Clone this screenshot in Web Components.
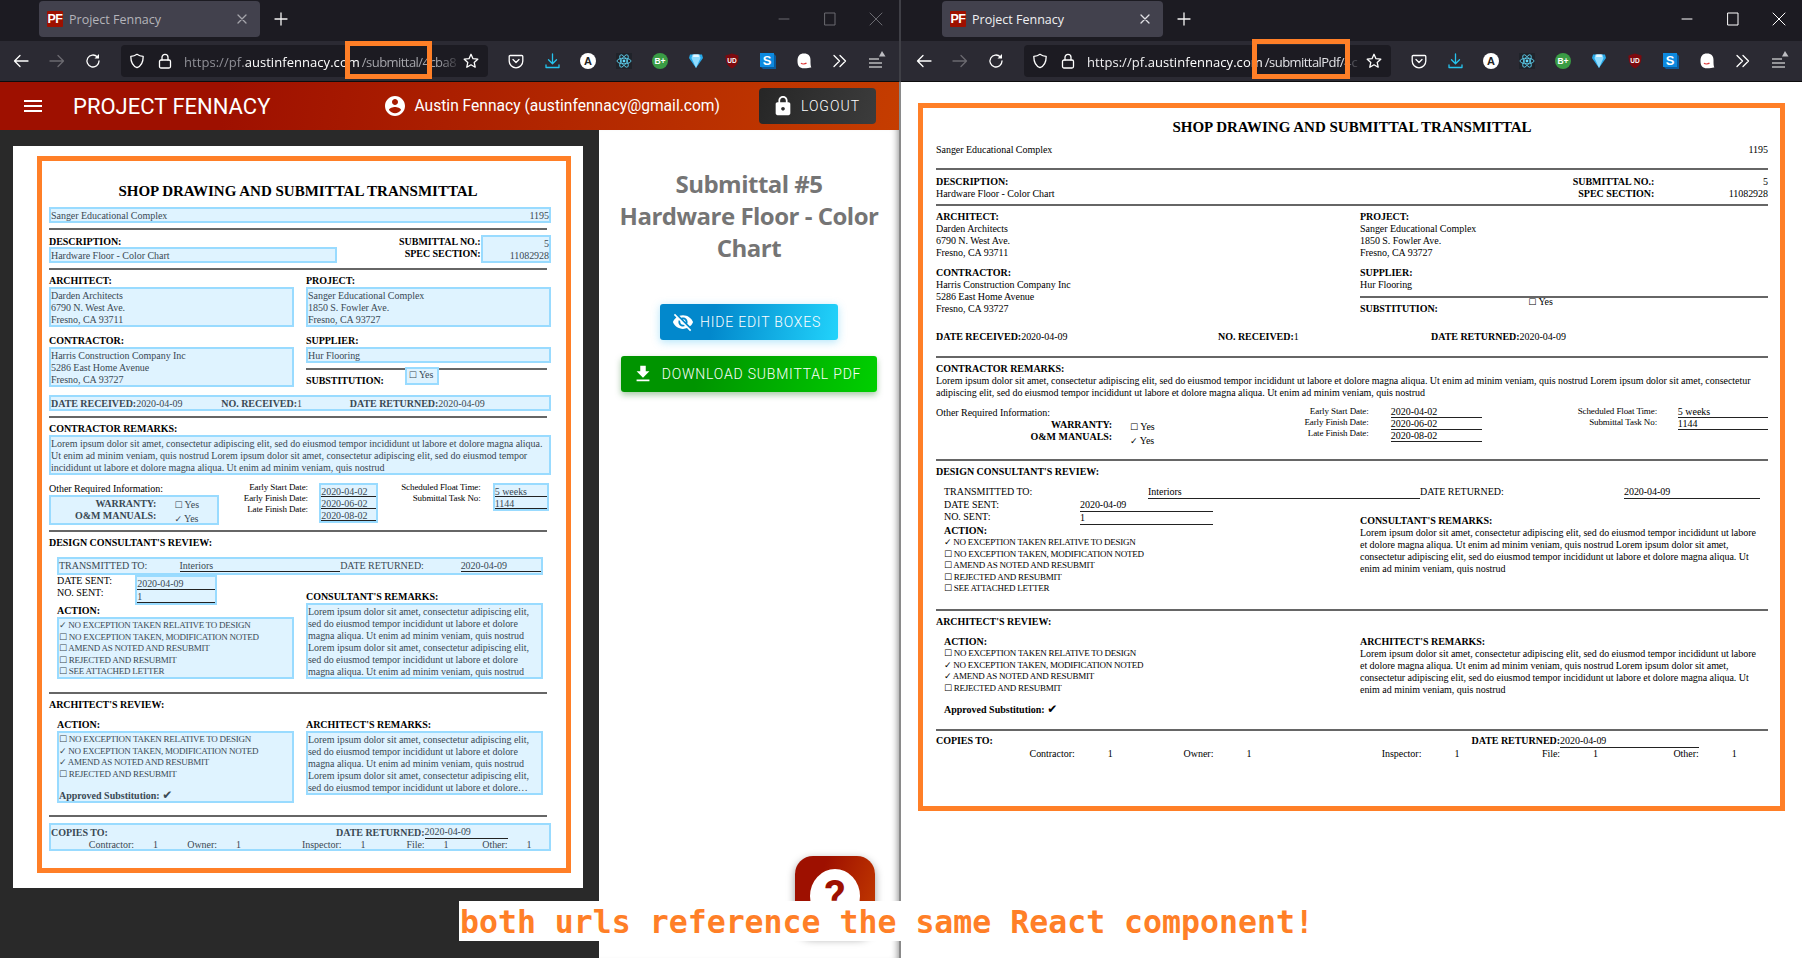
<!DOCTYPE html>
<html>
<head>
<meta charset="utf-8">
<title>Project Fennacy</title>
<style>
  html, body { margin: 0; height: 100%; overflow: hidden; background: #fff; }
  body { position: relative; display: flex; width: 1802px; height: 958px; }
  browser-window.left { width: 899px; }
  browser-window.right { width: 901px; margin-left: 2px; }
  .seam { position: absolute; left: 899px; top: 0; bottom: 0; width: 2px; background: linear-gradient(#3f3f46 82px, #8a8a8a 82px); }
</style>
</head>
<body>

<browser-window class="left" url-head="https://pf." url-host="austinfennacy.com" url-path="/submittal/4cba8"
                hl-x="345" hl-y="41" hl-w="87" hl-h="38" inactive>
  <fennacy-app></fennacy-app>
</browser-window>
<div class="seam"></div>
<browser-window class="right" url-head="https://pf." url-host="austinfennacy.com" url-path="/submittalPdf/" url-tail="4c"
                hl-x="351" hl-y="39" hl-w="98" hl-h="40">
  <pdf-page></pdf-page>
</browser-window>
<note-banner>both urls reference the same React component!</note-banner>

<script>
const MI = {
  menu: 'M3 18h18v-2H3v2zm0-5h18v-2H3v2zm0-7v2h18V6H3z',
  account: 'M12 2C6.48 2 2 6.48 2 12s4.48 10 10 10 10-4.48 10-10S17.52 2 12 2zm0 3c1.66 0 3 1.34 3 3s-1.34 3-3 3-3-1.34-3-3 1.34-3 3-3zm0 14.2c-2.5 0-4.71-1.28-6-3.22.03-1.99 4-3.08 6-3.08 1.99 0 5.97 1.09 6 3.08-1.29 1.94-3.5 3.22-6 3.22z',
  lock: 'M18 8h-1V6c0-2.76-2.24-5-5-5S7 3.24 7 6v2H6c-1.1 0-2 .9-2 2v10c0 1.1.9 2 2 2h12c1.1 0 2-.9 2-2V10c0-1.1-.9-2-2-2zm-6 9c-1.1 0-2-.9-2-2s.9-2 2-2 2 .9 2 2-.9 2-2 2zm3.1-9H8.9V6c0-1.71 1.39-3.1 3.1-3.1 1.71 0 3.1 1.39 3.1 3.1v2z',
  eyeOff: 'M12 7c2.76 0 5 2.24 5 5 0 .65-.13 1.26-.36 1.83l2.92 2.92c1.51-1.26 2.7-2.89 3.43-4.75-1.73-4.39-6-7.5-11-7.5-1.4 0-2.74.25-3.98.7l2.16 2.16C10.74 7.13 11.35 7 12 7zM2 4.27l2.28 2.28.46.46C3.08 8.3 1.78 10.02 1 12c1.73 4.39 6 7.5 11 7.5 1.55 0 3.03-.3 4.38-.84l.42.42L19.73 22 21 20.73 3.27 3 2 4.27zM7.53 9.8l1.55 1.55c-.05.21-.08.43-.08.65 0 1.66 1.34 3 3 3 .22 0 .44-.03.65-.08l1.55 1.55c-.67.33-1.41.53-2.2.53-2.76 0-5-2.24-5-5 0-.79.2-1.53.53-2.2zm4.31-.78l3.15 3.15.02-.16c0-1.66-1.34-3-3-3l-.17.01z',
  download: 'M19 9h-4V3H9v6H5l7 7 7-7zM5 18v2h14v-2H5z'
};
const mi = (name, size) => `<svg width="${size}" height="${size}" viewBox="0 0 24 24" fill="currentColor"><path d="${MI[name]}"/></svg>`;
const ic = (body, extra = '') => `<svg width="16" height="16" viewBox="0 0 16 16" fill="none" stroke="currentColor" stroke-width="1.3" stroke-linecap="round" stroke-linejoin="round" ${extra}>${body}</svg>`;

// extension icons, left to right, same row in both windows
const EXTENSIONS = [
  ic('<path d="M2.2 2.5h11.6a1 1 0 0 1 1 1V8a6.8 6.8 0 0 1-13.6 0V3.500a1 1 0 0 1 1-1z"/><path d="M5 6.500 8 9.500l3-3"/>'),
  ic('<path d="M8.500 1v9.500M4.500 6.800l4 4 4-4"/><path d="M2 12v2.500h13V12"/>', 'style="color:#25c4ee"'),
  `<svg width="16" height="16" viewBox="0 0 16 16"><circle cx="8" cy="8" r="8" fill="#fff"/><text x="8" y="12" font-family="Liberation Sans" font-size="11" font-weight="700" text-anchor="middle" fill="#222">A</text></svg>`,
  `<svg width="16" height="16" viewBox="0 0 16 16"><rect width="16" height="16" fill="#20232a"/><g fill="none" stroke="#61dafb" stroke-width=".8"><ellipse cx="8" cy="8" rx="7" ry="2.800"/><ellipse cx="8" cy="8" rx="7" ry="2.800" transform="rotate(60 8 8)"/><ellipse cx="8" cy="8" rx="7" ry="2.800" transform="rotate(120 8 8)"/></g><circle cx="8" cy="8" r="1.400" fill="#61dafb"/></svg>`,
  `<svg width="16" height="16" viewBox="0 0 16 16"><circle cx="8" cy="8" r="8" fill="#3a9c45"/><text x="8" y="11" font-family="Liberation Sans" font-size="8.500" font-weight="700" text-anchor="middle" fill="#fff">B+</text></svg>`,
  `<svg width="16" height="16" viewBox="0 0 16 16"><path d="M2 1.500h12L15 5 8 15 1 5z" fill="#27a8e8"/><path d="M4.500 1.500h7L12.500 5 8 15 3.500 5z" fill="#8fdcff"/><path d="M5.500 1.500h5L11 4H5z" fill="#e4f7ff"/></svg>`,
  `<svg width="16" height="16" viewBox="0 0 16 16"><path d="M8 .5 14.500 2.500c0 6-1 10-6.500 13C2.500 12.500 1.500 8.500 1.500 2.500z" fill="#7c0a0f"/><text x="8" y="9.800" font-family="Liberation Sans" font-size="6.500" font-weight="700" text-anchor="middle" fill="#fff">UD</text></svg>`,
  `<svg width="16" height="16" viewBox="0 0 16 16"><path d="M1 1h13l2 2v13H3l-2-2z" fill="#0a5a9c"/><rect x="0" y="0" width="14" height="14" fill="#0d8ae0"/><text x="7" y="12" font-family="Liberation Sans" font-size="13" font-weight="700" text-anchor="middle" fill="#fff">S</text></svg>`,
  `<svg width="16" height="16" viewBox="0 0 16 16"><path d="M8 .5c4.500 0 6.500 2.500 6.500 6.500 0 3.500 0 5.500.8 7.500-2-.2-3.300.8-7.300.8C3.500 15.300 1.500 13 1.500 8c0-5 2-7.500 6.500-7.500z" fill="#fff"/><path d="M5 10c1 1.300 4 1.300 5.500 0" fill="none" stroke="#d33" stroke-width="1.200"/></svg>`,
  ic('<path d="M2 2.500 7.500 8 2 13.500M8 2.500 13.500 8 8 13.500"/>'),
  `<svg width="20" height="20" viewBox="0 0 20 20" fill="none" stroke="currentColor" stroke-width="1.200" style="margin:-3px 0 0 2px"><path d="M2 9h10M2 13h13M2 17h13"/><path d="M12 6.500 15 1l3.500 5.500z" fill="#bdbdc2" stroke="none"/></svg>`
].map(svg => `<span class="cell">${svg}</span>`).join('');

class BrowserWindow extends HTMLElement {
  constructor() {
    super();
    this.attachShadow({ mode: 'open' });
  }
  connectedCallback() {
    const a = n => this.getAttribute(n) || '';
    this.shadowRoot.innerHTML = `
      <style>
        :host { display: flex; flex-direction: column; height: 958px; position: relative; overflow: hidden; font-family: "Open Sans", "Noto Sans", sans-serif; color: #fff; --dim: #e2e2e6; --head: #f0f0f2; --ctl: #fff; }
        :host([inactive]) { --dim: #a5a5ab; --head: #8f8f96; --ctl: #6a6a70; }
        :host(.right) .strip, :host(.right) .bar { padding-left: 2px; }
        .strip { height: 41px; background: #1c1b22; display: flex; align-items: flex-start; box-sizing: border-box; }
        .tab { margin: 1px 0 0 39px; width: 221px; height: 36px; background: #42414d; border-radius: 4px; display: flex; align-items: center; padding: 0 10px 0 8px; box-sizing: border-box; }
        .fav { width: 16px; height: 16px; background: #9e1000; border-radius: 1px; font: 700 12.5px/16px "Liberation Sans", sans-serif; color: #fff; text-align: center; letter-spacing: -.5px; flex: none; }
        .name { margin-left: 6px; font-size: 12.5px; color: var(--head); flex: 1; white-space: nowrap; }
        :host([inactive]) .name { color: #b4b4ba; }
        .x { color: var(--dim); display: flex; }
        .plus { margin: 11px 0 0 13px; display: flex; color: #f4f4f4; }
        .ctl { margin-left: auto; display: flex; color: var(--ctl); }
        .ctl span { width: 46px; height: 38px; display: flex; align-items: center; justify-content: center; }
        .bar { height: 41px; box-sizing: border-box; border-bottom: 1px solid #0c0c0d; background: #2b2a33; display: flex; align-items: center; }
        .cell { width: 36px; height: 32px; flex: none; display: flex; align-items: center; justify-content: center; }
        .nav { margin-left: 3px; display: flex; }
        .dis { color: #6b6a70; }
        .url { width: 367px; height: 32px; margin-left: 10px; background: #1c1b22; border-radius: 4px; display: flex; align-items: center; flex: none; }
        .url .sh { margin-left: 8px; display: flex; }
        .url .lk { margin-left: 12px; display: flex; }
        .addr { margin-left: 11px; margin-top: 2px; width: 277px; overflow: hidden; white-space: nowrap; font-size: 13px; letter-spacing: .05px; -webkit-mask-image: linear-gradient(to right, #000 92%, transparent); mask-image: linear-gradient(to right, #000 92%, transparent); }
        .addr i { font-style: normal; color: var(--head); }
        .addr b { font-weight: 400; color: #fff; }
        .addr u { text-decoration: none; color: var(--dim); letter-spacing: -.55px; margin-left: 2px; }
        .addr s { text-decoration: none; color: #8f8f96; }
        .star { margin-left: 2px; display: flex; }
        .exts { margin-left: 10px; display: flex; }
        .page { flex: 1; min-height: 0; position: relative; }
        .hl { position: absolute; box-sizing: border-box; border: 5px solid #ff7f27; }
      </style>
      <div class="strip">
        <div class="tab">
          <span class="fav">PF</span><span class="name">Project Fennacy</span>
          <span class="x">${ic('<path d="M4 4l8 8M12 4l-8 8"/>', 'stroke-width="1.100"')}</span>
        </div>
        <span class="plus">${ic('<path d="M8 2v12M2 8h12"/>')}</span>
        <div class="ctl">
          <span>${ic('<path d="M3 8h10"/>', 'style="stroke-width:1"')}</span>
          <span>${ic('<rect x="3" y="2" width="10" height="12"/>', 'style="stroke-width:1"')}</span>
          <span>${ic('<path d="M2 2l12 12M14 2 2 14"/>', 'style="stroke-width:1"')}</span>
        </div>
      </div>
      <div class="bar">
        <div class="nav">
          <span class="cell">${ic('<path d="M15 8H1.500M7 2.500 1.500 8 7 13.500"/>')}</span>
          <span class="cell dis">${ic('<path d="M1 8h13.500M9 2.500 14.500 8 9 13.500"/>')}</span>
          <span class="cell">${ic('<path d="M14 8a6 6 0 1 1-1.800-4.300"/><path d="M14 1v4.500H9.500z" fill="currentColor" stroke="none"/>')}</span>
        </div>
        <div class="url">
          <span class="sh">${ic('<path d="M8 1.300C6 2.800 4 3.300 1.800 3.400c0 5.200 1 9 6.200 11.300 5.200-2.300 6.200-6.100 6.200-11.300C12 3.300 10 2.800 8 1.300z"/>')}</span>
          <span class="lk">${ic('<rect x="2.500" y="7" width="11" height="8" rx="1.500"/><path d="M5 7V4.300a3 3 0 0 1 6 0V7"/>')}</span>
          <span class="addr"><i>${a('url-head')}</i><b>${a('url-host')}</b><u>${a('url-path')}</u><s>${a('url-tail')}</s></span>
          <span class="star">${ic('<path d="M8 1.300l2 4.400 4.800.5-3.600 3.200 1 4.800L8 11.800 3.800 14.200l1-4.800L1.200 6.200 6 5.700z"/>')}</span>
        </div>
        <div class="exts">${EXTENSIONS}</div>
      </div>
      <div class="page"><slot></slot></div>
      <div class="hl" style="left:${a('hl-x')}px;top:${a('hl-y')}px;width:${a('hl-w')}px;height:${a('hl-h')}px"></div>
    `;
  }
}
customElements.define('browser-window', BrowserWindow);

const LOREM = 'Lorem ipsum dolor sit amet, consectetur adipiscing elit, sed do eiusmod tempor incididunt ut labore et dolore magna aliqua. Ut enim ad minim veniam, quis nostrud';

const docStyle = `
  :host { display: block; box-sizing: border-box; border: 5px solid #ff7f27; background: #fff; color: #000;
          font: 10px/12px "Liberation Serif", "DejaVu Serif", serif; letter-spacing: -.035px; }
  :host([edit]) { width: 534px; height: 717px; padding: 21px 19px 0 7px; }
  :host(:not([edit])) { width: 867px; height: 708px; padding: 10px 12px 0 13px; }
  * { box-sizing: border-box; }
  .title { margin: 0; font: 700 15px/18px "Liberation Serif", serif; text-align: center; letter-spacing: 0; }
  .m { margin-top: var(--e); }
  :host(:not([edit])) .m { margin-top: var(--p); }
  hr { border: 0; height: 2px; background: #666; margin: 0; }
  .lb { font-weight: 700; }
  .r { text-align: right; }
  .box { box-sizing: content-box; width: 100%; min-height: 12px; }
  /* text sits a pixel lower in the edit boxes: top padding, bottom border half drawn as an inset shadow */
  :host([edit]) .box { border: 2px solid #99dbff; border-bottom-width: 1px; padding-top: 1px; box-shadow: inset 0 -1px 0 #99dbff; background: #dff3ff; color: #3a4954; }
  :host([edit]) .b1 { margin-top: 1px; }
  :host([edit]) .lb, :host([edit]) .s1 { padding-top: 1px; margin-bottom: -1px; }
  :host([edit]) .war .lb { padding-top: 0; margin-bottom: 0; }
  .between { display: flex; justify-content: space-between; }
  .glyph { font-family: "DejaVu Sans", sans-serif; font-size: 9px; }
  .glyph.big { font-size: 12px; line-height: 0; }
  .desc { display: grid; grid-template-columns: 57% 1fr; }
  .spec { display: grid; grid-template-columns: 1fr 31%; }
  :host(:not([edit])) .spec { grid-template-columns: 1fr 31.800%; }
  .cols { display: grid; grid-template-columns: 1fr 1fr; column-gap: 16px; }
  .sub { display: flex; }
  .sub .lb { width: 41%; }
  .sub .box { width: auto; margin-top: -7px; height: 12px; padding: 0 1px; box-sizing: content-box; }
  :host([edit]) .sub .box { height: 14px; padding: 0 4px 0 2px; border-bottom-width: 2px; box-shadow: none; }
  :host(:not([edit])) .sub .box { margin-top: -7px; }
  .dates3 { display: grid; grid-template-columns: repeat(3, 1fr); }
  .war { display: grid; grid-template-columns: 63.500% 1fr; height: 27px; }
  :host([edit]) .war { height: 26px; }
  .yes { padding-left: 18px; padding-top: 1px; line-height: 13px; }
  :host([edit]) .yes { padding-top: 0; }
  .kv { display: grid; }
  .kv.a { grid-template-columns: 56% 33%; column-gap: 8%; }
  .kv.b { grid-template-columns: 60% 31.500%; column-gap: 8.500%; }
  :host(:not([edit])) .kv.b { grid-template-columns: 60% 32.500%; column-gap: 7.500%; }
  .tiny { font-size: 9px; line-height: 11px; text-align: right; margin-top: -1px; letter-spacing: -.1px; }
  :host([edit]) .tiny { margin-top: 0; }
  .vals { align-self: start; }
  :host([edit]) .vals { margin-left: -2px; }
  .vals div { height: 12px; line-height: 11px; border-bottom: 1px solid #222; white-space: nowrap; }
  /* these hold underlined rows: the rules stay put and the text moves inside its row */
  :host([edit]) .vals, :host([edit]) .sent .box, :host([edit]) .trans { padding-top: 0; border-bottom-width: 2px; box-shadow: none; }
  :host([edit]) .vals div { line-height: 13px; }
  :host([edit]) .sent .box div, :host([edit]) .trans div { line-height: 14px; }
  .indent { margin: 0 8px; }
  .trans { display: grid; grid-template-columns: 25% 33.33% 25% 16.67%; }
  .ul { border-bottom: 1px solid #222; height: 13px; }
  .sent { display: grid; grid-template-columns: 34% 33.3%; }
  :host([edit]) .sent .box { margin-left: -1px; }
  .sent .box div { height: 13px; border-bottom: 1px solid #222; }
  .items { font-size: 9px; }
  .items div { height: 11.6px; line-height: 11.6px; white-space: nowrap; letter-spacing: -.25px; }
  .items .appr { margin-top: 9.600px; height: 12px; font-weight: 700; font-size: 10px; line-height: 12px; letter-spacing: 0; }
  :host([edit]) .clamp { display: -webkit-box; -webkit-box-orient: vertical; -webkit-line-clamp: 5; overflow: hidden; }
  .drow { display: grid; grid-template-columns: 1fr auto 16.67% 8.33%; }
  .crow { display: grid; grid-template-columns: 16.67% 16.67% 25% 16.67% 16.67% 8.33%; height: 11px; }
  .crow span { display: flex; justify-content: space-between; }
  .crow i { font-style: normal; padding-left: var(--vp); }
  :host([edit]) { --vp: 19px; }
  :host(:not([edit])) { --vp: 33px; }
  .drec { display: grid; grid-template-columns: 34.2% 25.8% 40%; }
  :host(:not([edit])) .drec { grid-template-columns: 33.900% 25.600% 40.500%; }
`;
const BOX = '<span class="glyph">☐</span>', TICK = '<span class="glyph">✓</span>';
const docHtml = `
  <h1 class="title">SHOP DRAWING AND SUBMITTAL TRANSMITTAL</h1>
  <div class="box between m" style="--e:7px;--p:8px"><span>Sanger Educational Complex</span><span>1195</span></div>
  <hr class="m" style="--e:5px;--p:12px">
  <div class="desc m" style="--e:5px;--p:6px">
    <div><div class="lb">DESCRIPTION:</div><div class="box">Hardware Floor - Color Chart</div></div>
    <div class="spec"><div class="lb r">SUBMITTAL NO.:<br>SPEC SECTION:</div><div class="box r">5<br>11082928</div></div>
  </div>
  <hr class="m" style="--e:5px;--p:4px">
  <div class="cols m" style="--e:4px;--p:5px">
    <div>
      <div class="lb">ARCHITECT:</div>
      <div class="box b1">Darden Architects<br>6790 N. West Ave.<br>Fresno, CA 93711</div>
      <div class="lb m" style="--e:7px;--p:8px">CONTRACTOR:</div>
      <div class="box b1">Harris Construction Company Inc<br>5286 East Home Avenue<br>Fresno, CA 93727</div>
    </div>
    <div>
      <div class="lb">PROJECT:</div>
      <div class="box b1">Sanger Educational Complex<br>1850 S. Fowler Ave.<br>Fresno, CA 93727</div>
      <div class="lb m" style="--e:7px;--p:8px">SUPPLIER:</div>
      <div class="box b1">Hur Flooring</div>
      <hr class="m" style="--e:5px;--p:5px">
      <div class="sub m" style="--e:4px;--p:5px"><div class="lb">SUBSTITUTION:</div><div class="box">${BOX} Yes</div></div>
    </div>
  </div>
  <div class="box drec m" style="--e:8px;--p:16px">
    <div><b>DATE RECEIVED:</b>2020-04-09</div><div><b>NO. RECEIVED:</b>1</div><div><b>DATE RETURNED:</b>2020-04-09</div>
  </div>
  <hr class="m" style="--e:5px;--p:13px">
  <div class="lb m" style="--e:4px;--p:5px">CONTRACTOR REMARKS:</div>
  <div class="box b1">${LOREM} ${LOREM}</div>
  <div class="dates3 m" style="--e:7px;--p:8px">
    <div>
      <div class="s1">Other Required Information:</div>
      <div class="box b1 war"><div class="lb r">WARRANTY:<br>O&amp;M MANUALS:</div><div class="yes">${BOX} Yes<br>${TICK} Yes</div></div>
    </div>
    <div class="kv a">
      <div class="tiny">Early Start Date:<br>Early Finish Date:<br>Late Finish Date:</div>
      <div class="box vals m" style="--e:1px;--p:-1px"><div>2020-04-02</div><div>2020-06-02</div><div>2020-08-02</div></div>
    </div>
    <div class="kv b">
      <div class="tiny">Scheduled Float Time:<br>Submittal Task No:</div>
      <div class="box vals m" style="--e:1px;--p:-1px"><div>5 weeks</div><div>1144</div></div>
    </div>
  </div>
  <hr class="m" style="--e:5px;--p:13px">
  <div class="lb m" style="--e:4px;--p:5px">DESIGN CONSULTANT'S REVIEW:</div>
  <div class="indent">
    <div class="box trans m" style="--e:9px;--p:8px">
      <div>TRANSMITTED TO:</div><div class="ul">Interiors</div><div>DATE RETURNED:</div><div class="ul">2020-04-09</div>
    </div>
    <div class="cols m" style="--e:-1px;--p:0px">
      <div>
        <div class="sent">
          <div class="s1">DATE SENT:<br>NO. SENT:</div>
          <div class="box m" style="--e:1px;--p:0px"><div>2020-04-09</div><div>1</div></div>
        </div>
        <div class="lb m" style="--e:-1px;--p:0px">ACTION:</div>
        <div class="box b1 items">
          <div>${TICK} NO EXCEPTION TAKEN RELATIVE TO DESIGN</div>
          <div>${BOX} NO EXCEPTION TAKEN, MODIFICATION NOTED</div>
          <div>${BOX} AMEND AS NOTED AND RESUBMIT</div>
          <div>${BOX} REJECTED AND RESUBMIT</div>
          <div>${BOX} SEE ATTACHED LETTER</div>
        </div>
      </div>
      <div style="margin-top:16px">
        <div class="lb">CONSULTANT'S REMARKS:</div>
        <div class="box b1">${LOREM} ${LOREM}</div>
      </div>
    </div>
  </div>
  <hr class="m" style="--e:13px;--p:14px">
  <div class="lb m" style="--e:4px;--p:5px">ARCHITECT'S REVIEW:</div>
  <div class="indent">
    <div class="cols m" style="--e:8px;--p:8px">
      <div>
        <div class="lb">ACTION:</div>
        <div class="box b1 items">
          <div>${BOX} NO EXCEPTION TAKEN RELATIVE TO DESIGN</div>
          <div>${TICK} NO EXCEPTION TAKEN, MODIFICATION NOTED</div>
          <div>${TICK} AMEND AS NOTED AND RESUBMIT</div>
          <div>${BOX} REJECTED AND RESUBMIT</div>
          <div class="appr">Approved Substitution: <span class="glyph big">✔</span></div>
        </div>
      </div>
      <div>
        <div class="lb">ARCHITECT'S REMARKS:</div>
        <div class="box b1"><div class="clamp">${LOREM} ${LOREM}</div></div>
      </div>
    </div>
  </div>
  <hr class="m" style="--e:12px;--p:13px">
  <div class="box m" style="--e:6px;--p:4px">
    <div class="drow"><div class="lb">COPIES TO:</div><div class="lb">DATE RETURNED:</div><div class="ul">2020-04-09</div><div></div></div>
    <div class="crow">
      <span><i></i>Contractor:</span><span><i>1</i>Owner:</span><span><i>1</i>Inspector:</span><span><i>1</i>File:</span><span><i>1</i>Other:</span><span><i>1</i></span>
    </div>
  </div>
`;

class SubmittalDoc extends HTMLElement {
  constructor() {
    super();
    this.attachShadow({ mode: 'open' }).innerHTML = `<style>${docStyle}</style>${docHtml}`;
  }
}
customElements.define('submittal-doc', SubmittalDoc);

class AppButton extends HTMLElement {
  constructor() {
    super();
    this.attachShadow({ mode: 'open' });
  }
  connectedCallback() {
    this.shadowRoot.innerHTML = `
      <style>
        :host { display: inline-flex; align-items: center; height: 36px; box-sizing: border-box; border-radius: 3px; color: #fff;
                font: 300 14px/36px Roboto, sans-serif; letter-spacing: .8px; white-space: nowrap; }
        :host([kind=blue]) { background: linear-gradient(100deg, #0288cc 30%, #22d3fb); box-shadow: 0 2px 8px rgba(34,180,240,.35); padding: 0 17px 0 12px; gap: 6px; }
        :host([kind=green]) { background: linear-gradient(100deg, #009400 30%, #00cf00); box-shadow: 0 3px 6px rgba(0,100,0,.35); padding: 0 16px 0 11px; gap: 8px; }
        :host([kind=dark]) { background: linear-gradient(110deg, #262626, #3c3c3c); padding: 0 16px 0 13px; gap: 7px; border-radius: 4px; letter-spacing: 1px; }
        svg { display: block; flex: none; }
      </style>
      ${mi(this.getAttribute('icon'), +this.getAttribute('size') || 22)}<slot></slot>`;
  }
}
customElements.define('app-button', AppButton);

class AppBar extends HTMLElement {
  constructor() {
    super();
    this.attachShadow({ mode: 'open' }).innerHTML = `
      <style>
        :host { display: flex; align-items: center; height: 48px; padding: 0 23px 0 21px; box-sizing: border-box; color: #fff;
                background: linear-gradient(100deg, #9e1000 25%, #c53d00); font-family: Roboto, sans-serif; }
        .title { margin-left: 28px; font-size: 22px; letter-spacing: 0; }
        .user { margin-left: auto; display: flex; align-items: center; gap: 8px; font-size: 15.600px; }
        app-button { margin-left: 39px; }
        svg { display: block; }
      </style>
      ${mi('menu', 24)}
      <span class="title">PROJECT FENNACY</span>
      <span class="user">${mi('account', 24)}<span>Austin Fennacy (austinfennacy@gmail.com)</span></span>
      <app-button kind="dark" icon="lock" size="22">LOGOUT</app-button>`;
  }
}
customElements.define('app-bar', AppBar);

class SidePanel extends HTMLElement {
  constructor() {
    super();
    this.attachShadow({ mode: 'open' }).innerHTML = `
      <style>
        :host { display: flex; flex-direction: column; align-items: center; position: relative; background: #fff; box-shadow: inset -7px 0 7px -6px rgba(0,0,0,.45); padding-top: 38px; box-sizing: border-box; height: 100%; }
        h2 { margin: 0 0 40px; width: 280px; text-align: center; font: 700 24px/32px "Open Sans", "Noto Sans", sans-serif; color: #757575; letter-spacing: -.5px; }
        app-button + app-button { margin-top: 16px; }
        .help { position: absolute; left: 196px; top: 726px; width: 80px; height: 80px; border-radius: 18px; background: linear-gradient(110deg, #9e1000 30%, #c53d00); box-shadow: 0 3px 8px rgba(0,0,0,.4); display: flex; align-items: center; justify-content: center; }
        .help span { width: 50px; height: 54px; border-radius: 50%; background: #fff; color: #9e1000; font: 700 42px/54px Roboto, sans-serif; text-align: center; }
      </style>
      <h2>Submittal #5<br>Hardware Floor - Color Chart</h2>
      <app-button kind="blue" icon="eyeOff" size="22">HIDE EDIT BOXES</app-button>
      <app-button kind="green" icon="download" size="22">DOWNLOAD SUBMITTAL PDF</app-button>
      <div class="help"><span>?</span></div>`;
  }
}
customElements.define('side-panel', SidePanel);

class FennacyApp extends HTMLElement {
  constructor() {
    super();
    this.attachShadow({ mode: 'open' }).innerHTML = `
      <style>
        :host { display: flex; flex-direction: column; height: 100%; }
        .main { flex: 1; display: grid; grid-template-columns: 599px 1fr; min-height: 0; }
        .dark { background: #292929; padding: 16px 0 0 13px; box-sizing: border-box; }
        .paper { width: 570px; height: 742px; background: #fff; padding: 10px 0 0 24px; box-sizing: border-box; }
      </style>
      <app-bar></app-bar>
      <div class="main">
        <div class="dark"><div class="paper"><submittal-doc edit></submittal-doc></div></div>
        <side-panel></side-panel>
      </div>`;
  }
}
customElements.define('fennacy-app', FennacyApp);

class PdfPage extends HTMLElement {
  constructor() {
    super();
    this.attachShadow({ mode: 'open' }).innerHTML = `
      <style>:host { display: block; height: 100%; background: #fff; padding: 21px 0 0 17px; box-sizing: border-box; }</style>
      <submittal-doc></submittal-doc>`;
  }
}
customElements.define('pdf-page', PdfPage);

class NoteBanner extends HTMLElement {
  constructor() {
    super();
    this.attachShadow({ mode: 'open' }).innerHTML = `
      <style>
        :host { position: absolute; left: 459px; top: 901px; height: 40px; width: 443px; background: #fff; }
        span { position: absolute; left: 1px; top: 1px; font: 700 31.530px/40px "DejaVu Sans Mono", monospace; color: #ff7f27; white-space: nowrap; }
      </style>
      <span><slot></slot></span>`;
  }
}
customElements.define('note-banner', NoteBanner);
</script>
</body>
</html>
